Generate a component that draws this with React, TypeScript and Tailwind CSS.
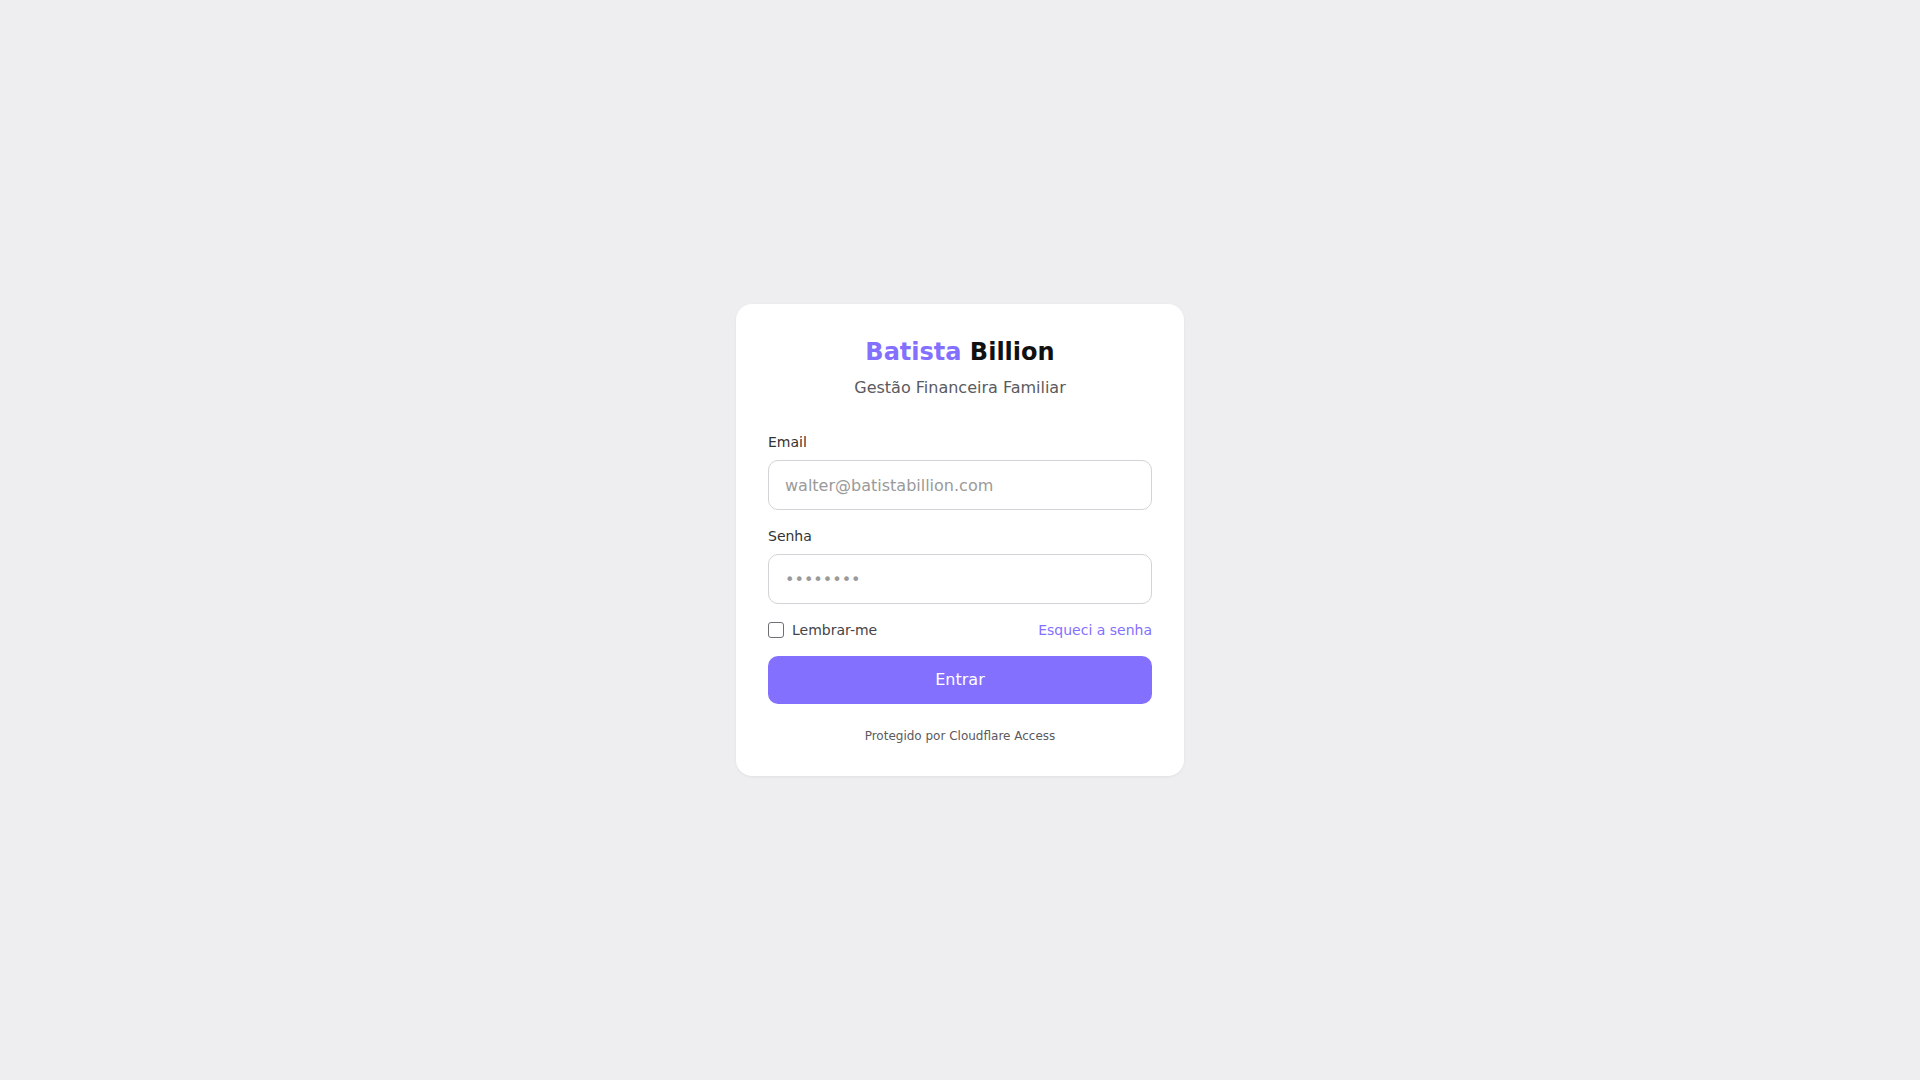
export default function App() {
  return (
    <div
      className="min-h-screen w-full bg-[#eeeef0] flex items-center justify-center"
      style={{ fontFamily: '"DejaVu Sans", sans-serif' }}
    >
      <div className="w-[448px] bg-white rounded-2xl px-8 pt-8 pb-8 shadow-[0_1px_3px_rgba(0,0,0,0.06)]">
        <div className="text-center">
          <h1 className="text-[24px] leading-[32px] font-bold text-[#111111]">
            <span className="text-[#8470ff]">Batista</span> Billion
          </h1>
          <p className="mt-[8px] text-[16px] leading-[24px] text-[#5a5a60]">Gestão Financeira Familiar</p>
        </div>

        <form className="mt-[32px] flex flex-col" onSubmit={(e) => e.preventDefault()}>
          <label className="text-[14px] leading-[20px] text-[#333333]">Email</label>
          <input
            type="email"
            placeholder="walter@batistabillion.com"
            className="mt-2 h-[50px] w-full rounded-[10px] border border-[#d4d4d8] px-4 text-[16px] text-[#333] placeholder:text-[#9a9a9a] outline-none"
            style={{ fontFamily: '"DejaVu Sans", sans-serif' }}
          />
          <label className="mt-4 text-[14px] leading-[20px] text-[#333333]">Senha</label>
          <input
            type="password"
            placeholder="••••••••"
            className="mt-2 h-[50px] w-full rounded-[10px] border border-[#d4d4d8] px-4 text-[16px] text-[#333] placeholder:text-[#9a9a9a] outline-none"
            style={{ fontFamily: '"DejaVu Sans", sans-serif' }}
          />
          <div className="mt-4 flex items-center justify-between h-[20px]">
            <label className="flex items-center gap-2 text-[14px] text-[#444448]">
              <span className="w-[16px] h-[16px] rounded-[3px] border border-[#6e6e73] bg-white inline-block" />
              Lembrar-me
            </label>
            <a href="#" className="text-[14px] text-[#8470ff]">Esqueci a senha</a>
          </div>
          <button
            type="submit"
            className="mt-4 h-[48px] w-full rounded-[10px] bg-[#8470ff] text-white text-[16px]"
            style={{ fontFamily: '"DejaVu Sans", sans-serif' }}
          >
            Entrar
          </button>
          <p className="mt-6 text-center text-[12px] leading-[16px] text-[#5a5a60]">Protegido por Cloudflare Access</p>
        </form>
      </div>
    </div>
  );
}
